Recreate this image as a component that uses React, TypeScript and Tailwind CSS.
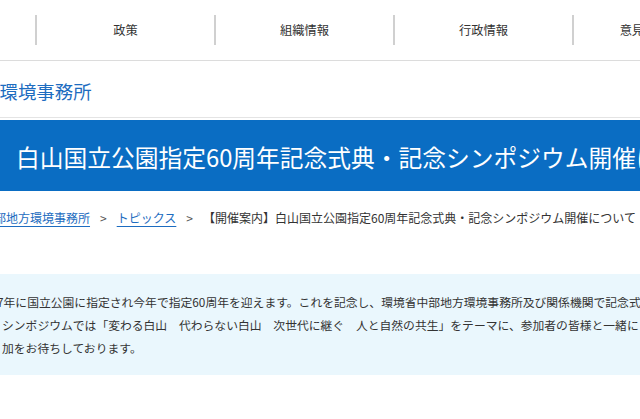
import React from 'react';

const navItems = ['ホーム', '政策', '組織情報', '行政情報', '意見・お問合せ'];

function GlobalNav() {
  return (
    <nav className="h-[61px] border-b border-[#dcdcdc] overflow-hidden">
      <ul className="flex items-center h-[60px] -ml-[144px] whitespace-nowrap">
        {navItems.map((item, i) => (
          <li
            key={item}
            className={
              'w-[179px] shrink-0 h-[30px] flex items-center justify-center text-[12.25px] text-[#333] ' +
              (i > 0 ? 'border-l-2 border-[#d0d0d0]' : '')
            }
          >
            {item}
          </li>
        ))}
      </ul>
    </nav>
  );
}

function Breadcrumb() {
  return (
    <div className="mt-[17px] overflow-hidden">
      <ol className="flex items-center -ml-[18px] whitespace-nowrap text-[12px] leading-[20px] text-[#333]">
        <li>
          <a href="#" className="text-[#1d6cc0] underline underline-offset-[3px]">中部地方環境事務所</a>
        </li>
        <li className="mx-[10px] text-[#555]">&gt;</li>
        <li>
          <a href="#" className="text-[#1d6cc0] underline underline-offset-[3px]">トピックス</a>
        </li>
        <li className="mx-[10px] text-[#555]">&gt;</li>
        <li>【開催案内】白山国立公園指定60周年記念式典・記念シンポジウム開催について</li>
      </ol>
    </div>
  );
}

export default function App() {
  return (
    <div className="w-[640px] min-h-[419px] bg-white overflow-hidden font-['Noto_Sans_CJK_JP','Noto_Sans',sans-serif]">
      <GlobalNav />

      {/* Office name */}
      <div className="border-b border-[#e4e4e4] pt-[17px] pb-[13px] overflow-hidden">
        <p className="-ml-[74px] text-[18.4px] leading-[26px] text-[#1d6cc0] whitespace-nowrap">
          中部地方環境事務所
        </p>
      </div>

      {/* Page title */}
      <div className="mt-[2px] h-[71px] bg-[#0a6dc3] flex items-center pt-[3px] pl-[16px] overflow-hidden">
        <h1 className="text-[23.75px] text-white whitespace-nowrap">
          白山国立公園指定60周年記念式典・記念シンポジウム開催について
        </h1>
      </div>

      <Breadcrumb />

      {/* Lead text */}
      <div className="mt-[46px] bg-[#eaf7fd] py-[16px] pl-[2px] overflow-hidden">
        <p className="text-[11.8px] leading-[23px] text-[#333] whitespace-nowrap">
          <span className="inline-block -ml-[5px]">7年に国立公園に指定され今年で指定60周年を迎えます。これを記念し、環境省中部地方環境事務所及び関係機関で記念式典</span>
          <br />
          シンポジウムでは「変わる白山　代わらない白山　次世代に継ぐ　人と自然の共生」をテーマに、参加者の皆様と一緒に
          <br />
          加をお待ちしております。
        </p>
      </div>
    </div>
  );
}
